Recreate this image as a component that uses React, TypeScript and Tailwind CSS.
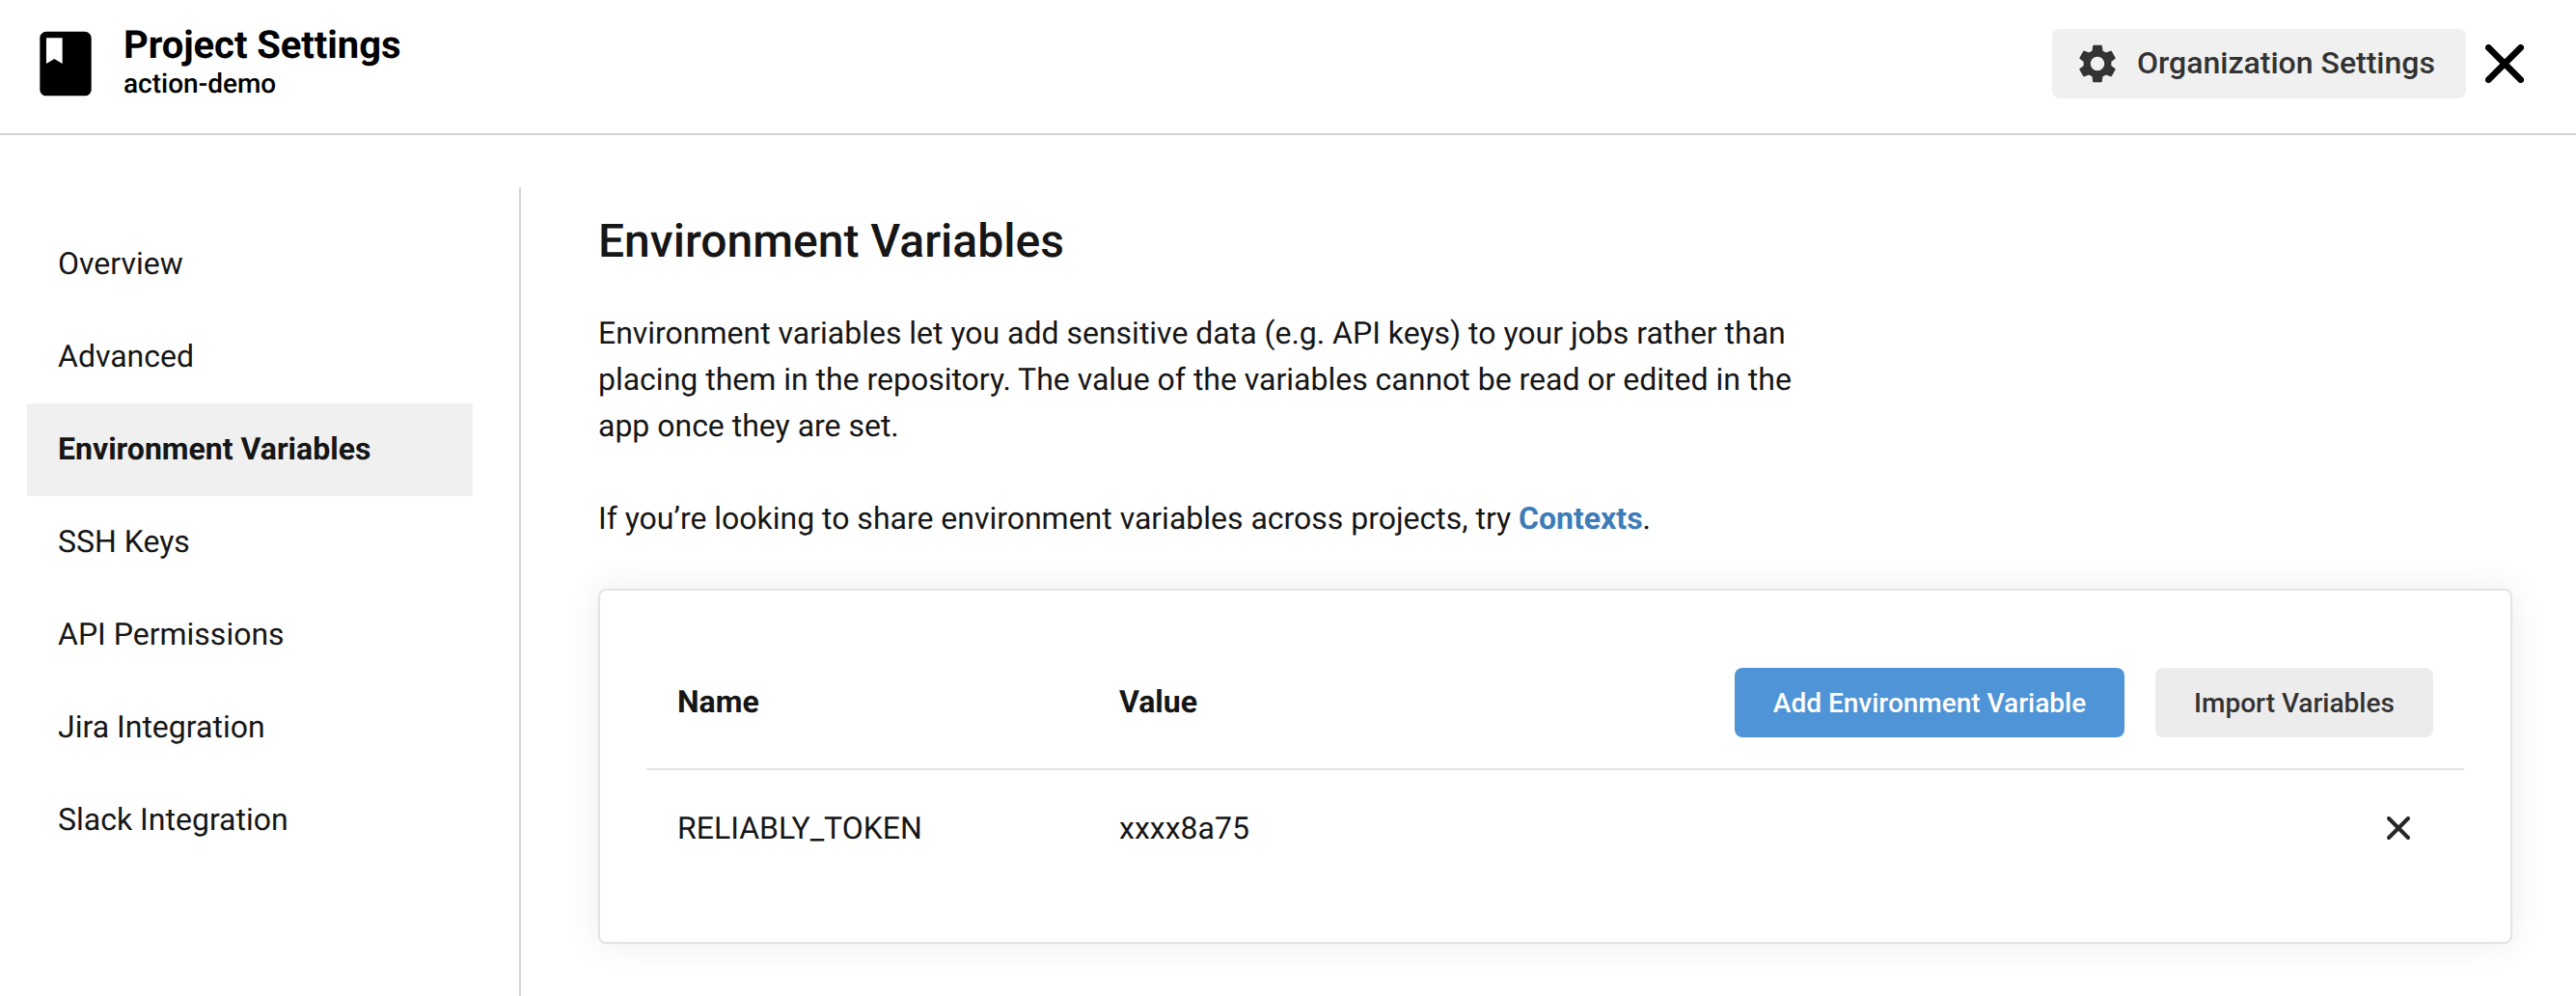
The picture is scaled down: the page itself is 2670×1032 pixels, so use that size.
import React from "react";
import { MdClass, MdSettings } from "react-icons/md";

const navItems = [
  { label: "Overview" },
  { label: "Advanced" },
  { label: "Environment Variables", active: true },
  { label: "SSH Keys" },
  { label: "API Permissions" },
  { label: "Jira Integration" },
  { label: "Slack Integration" },
];

const variables = [{ name: "RELIABLY_TOKEN", value: "xxxx8a75" }];

function Cross({ className }: { className: string }) {
  return (
    <svg viewBox="0 0 24 24" fill="none" stroke="currentColor" strokeWidth={4} strokeLinecap="round" className={className}>
      <path d="M2 2L22 22M22 2L2 22" />
    </svg>
  );
}

function Header() {
  return (
    <header className="flex h-[140px] items-start justify-between border-b-2 border-[#d4d4d4] pl-7 pr-[54px] text-black">
      <div className="flex">
        <MdClass className="mt-[26px] h-20 w-20" />
        <div className="ml-5 mt-[23px] whitespace-nowrap">
          <h1 className="text-[40px] font-bold leading-[48px] tracking-[-0.06px]">Project Settings</h1>
          <p className="text-[28px] font-medium leading-[32px]">action-demo</p>
        </div>
      </div>
      <div className="mt-[30px] flex items-center">
        <button className="flex h-[72px] w-[429px] items-center whitespace-nowrap rounded-lg bg-[#f0f0f0] pl-[23px] text-[32px] font-medium text-[#333]">
          <MdSettings className="h-12 w-12" />
          <span className="ml-[17px] pb-0.5">Organization Settings</span>
        </button>
        <Cross className="ml-5 h-10 w-10" />
      </div>
    </header>
  );
}

function Sidebar() {
  return (
    <nav className="mt-[54px] w-[540px] shrink-0 border-r-2 border-[#d4d4d4] pl-7 pr-12 pt-8">
      {navItems.map((item) => (
        <a
          key={item.label}
          className={
            item.active
              ? "flex h-24 items-center bg-[#f0f0f0] pb-0.5 pl-8 text-[32px] font-bold"
              : "flex h-24 items-center pb-0.5 pl-8 text-[32px]"
          }
        >
          {item.label}
        </a>
      ))}
    </nav>
  );
}

function VariablesCard() {
  return (
    <section className="mt-[49px] h-[368px] rounded-lg border-2 border-[#e3e3e3] bg-white px-12 pt-[80px] shadow-[0_0_36px_rgba(0,0,0,0.08)]">
      <div className="flex h-[106px] items-start border-b-2 border-[#e3e3e3] pl-8 pr-8 text-[32px] font-bold">
        <div className="w-[458px] leading-[70px]">Name</div>
        <div className="flex-1 leading-[70px]">Value</div>
        <button className="h-[72px] w-[404px] whitespace-nowrap rounded-lg bg-[#4f94d6] pt-0.5 text-[28px] font-medium text-white">
          Add Environment Variable
        </button>
        <button className="ml-8 h-[72px] w-[288px] whitespace-nowrap rounded-lg bg-[#ececec] pt-0.5 text-[28px] font-medium text-[#333]">
          Import Variables
        </button>
      </div>
      {variables.map((v) => (
        <div key={v.name} className="flex h-[120px] items-center pl-8 pr-14 text-[32px]">
          <div className="w-[458px]">{v.name}</div>
          <div className="flex-1">{v.value}</div>
          <Cross className="h-6 w-6 text-[#262626]" />
        </div>
      ))}
    </section>
  );
}

export default function App() {
  return (
    <div className="flex h-[1032px] w-[2670px] flex-col overflow-hidden bg-white font-['Roboto',sans-serif] text-[#161616] antialiased [text-rendering:geometricPrecision]">
      <Header />
      <div className="flex flex-1">
        <Sidebar />
        <main className="flex-1 pl-20 pr-[66px] pt-[80px]">
          <h2 className="text-[48px] font-medium leading-[60px]">Environment Variables</h2>
          <div className="mt-[41px] w-[1260px] text-[32px] leading-[48px] tracking-[-0.012px]">
            <p>
              Environment variables let you add sensitive data (e.g. API keys) to your jobs rather than
              placing them in the repository. The value of the variables cannot be read or edited in the
              app once they are set.
            </p>
            <p className="mt-12">
              If you’re looking to share environment variables across projects, try{" "}
              <a className="font-bold text-[#3e7cb8]">Contexts</a>.
            </p>
          </div>
          <VariablesCard />
        </main>
      </div>
    </div>
  );
}
